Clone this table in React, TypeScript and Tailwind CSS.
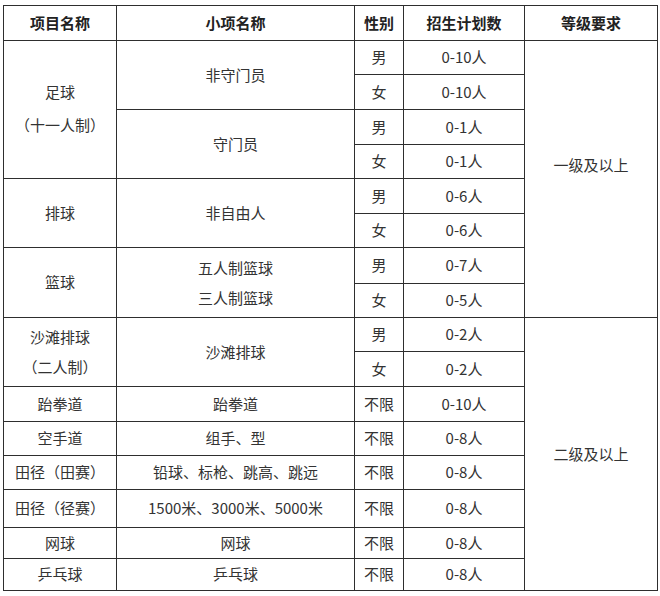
import React from 'react';

const cell = 'border border-[#2e2e2e] text-center align-middle p-0';

type Row = {
  h: number;
  cells: React.ReactNode;
};

export default function App() {
  const rows: Row[] = [
    {
      h: 34,
      cells: (
        <>
          <td rowSpan={4} className={cell}>
            <div className="leading-[33px] pb-[4px]">
              足球
              <br />
              （十一人制）
            </div>
          </td>
          <td rowSpan={2} className={cell}>非守门员</td>
          <td className={cell}>男</td>
          <td className={cell}>0-10人</td>
          <td rowSpan={8} className={cell}>
            <div className="pb-[28px]">一级及以上</div>
          </td>
        </>
      ),
    },
    { h: 35, cells: (<><td className={cell}>女</td><td className={cell}>0-10人</td></>) },
    {
      h: 35,
      cells: (
        <>
          <td rowSpan={2} className={cell}>守门员</td>
          <td className={cell}>男</td>
          <td className={cell}>0-1人</td>
        </>
      ),
    },
    { h: 34, cells: (<><td className={cell}>女</td><td className={cell}>0-1人</td></>) },
    {
      h: 35,
      cells: (
        <>
          <td rowSpan={2} className={cell}>排球</td>
          <td rowSpan={2} className={cell}>非自由人</td>
          <td className={cell}>男</td>
          <td className={cell}>0-6人</td>
        </>
      ),
    },
    { h: 34, cells: (<><td className={cell}>女</td><td className={cell}>0-6人</td></>) },
    {
      h: 36,
      cells: (
        <>
          <td rowSpan={2} className={cell}>篮球</td>
          <td rowSpan={2} className={cell}>
            <div className="leading-[30px]">
              五人制篮球
              <br />
              三人制篮球
            </div>
          </td>
          <td className={cell}>男</td>
          <td className={cell}>0-7人</td>
        </>
      ),
    },
    { h: 34, cells: (<><td className={cell}>女</td><td className={cell}>0-5人</td></>) },
    {
      h: 34,
      cells: (
        <>
          <td rowSpan={2} className={cell}>
            <div className="leading-[30px]">
              沙滩排球
              <br />
              （二人制）
            </div>
          </td>
          <td rowSpan={2} className={cell}>沙滩排球</td>
          <td className={cell}>男</td>
          <td className={cell}>0-2人</td>
          <td rowSpan={8} className={cell}>二级及以上</td>
        </>
      ),
    },
    { h: 35, cells: (<><td className={cell}>女</td><td className={cell}>0-2人</td></>) },
    {
      h: 35,
      cells: (
        <>
          <td className={cell}>跆拳道</td>
          <td className={cell}>跆拳道</td>
          <td className={cell}>不限</td>
          <td className={cell}>0-10人</td>
        </>
      ),
    },
    {
      h: 34,
      cells: (
        <>
          <td className={cell}>空手道</td>
          <td className={cell}>组手、型</td>
          <td className={cell}>不限</td>
          <td className={cell}>0-8人</td>
        </>
      ),
    },
    {
      h: 34,
      cells: (
        <>
          <td className={cell}>田径（田赛）</td>
          <td className={cell}>铅球、标枪、跳高、跳远</td>
          <td className={cell}>不限</td>
          <td className={cell}>0-8人</td>
        </>
      ),
    },
    {
      h: 38,
      cells: (
        <>
          <td className={cell}>田径（径赛）</td>
          <td className={cell}>1500米、3000米、5000米</td>
          <td className={cell}>不限</td>
          <td className={cell}>0-8人</td>
        </>
      ),
    },
    {
      h: 31,
      cells: (
        <>
          <td className={cell}>网球</td>
          <td className={cell}>网球</td>
          <td className={cell}>不限</td>
          <td className={cell}>0-8人</td>
        </>
      ),
    },
    {
      h: 32,
      cells: (
        <>
          <td className={cell}>乒乓球</td>
          <td className={cell}>乒乓球</td>
          <td className={cell}>不限</td>
          <td className={cell}>0-8人</td>
        </>
      ),
    },
  ];

  return (
    <div className="w-[660px] h-[596px] bg-white pt-[5px] pl-[3px] font-['Noto_Sans_CJK_SC','Noto_Sans',sans-serif] text-[15px] text-[#333]">
      <table className="table-fixed border-collapse w-[654px]">
        <colgroup>
          <col className="w-[113px]" />
          <col className="w-[238px]" />
          <col className="w-[49px]" />
          <col className="w-[121px]" />
          <col className="w-[133px]" />
        </colgroup>
        <thead>
          <tr className="h-[35px] font-bold text-[#222]">
            <th className={cell}>项目名称</th>
            <th className={cell}>小项名称</th>
            <th className={cell}>性别</th>
            <th className={cell}>招生计划数</th>
            <th className={cell}>等级要求</th>
          </tr>
        </thead>
        <tbody>
          {rows.map((r, i) => (
            <tr key={i} style={{ height: r.h }}>
              {r.cells}
            </tr>
          ))}
        </tbody>
      </table>
    </div>
  );
}
